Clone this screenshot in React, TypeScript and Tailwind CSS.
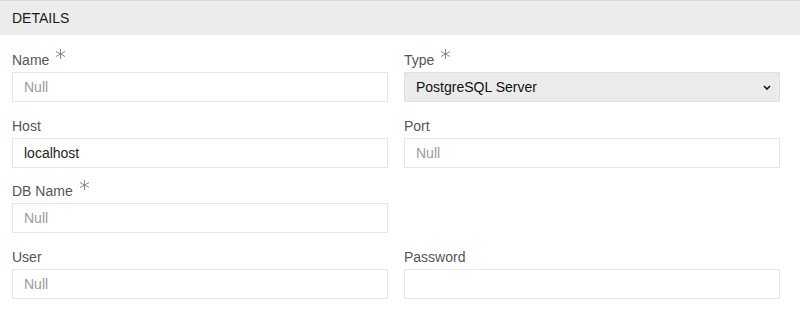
import React from "react";

const Req = () => (
  <svg
    width="11"
    height="10"
    viewBox="0 0 11 10"
    className="ml-[6px] -mt-px inline-block"
    stroke="#8a8a8a"
    strokeWidth="1"
    fill="none"
  >
    <line x1="5.5" y1="0" x2="5.5" y2="10" />
    <line x1="1" y1="2.5" x2="10" y2="7.5" />
    <line x1="1" y1="7.5" x2="10" y2="2.5" />
  </svg>
);

type FieldProps = {
  label: string;
  required?: boolean;
  value?: string;
  placeholder?: string;
};

const Field = ({ label, required, value, placeholder }: FieldProps) => (
  <div className="flex flex-col">
    <label className="h-5 leading-5 mb-[2px] text-[14px] text-[#555] flex items-start">
      <span>{label}</span>
      {required && <Req />}
    </label>
    <input
      type="text"
      defaultValue={value}
      placeholder={placeholder}
      className="h-[30px] border border-[#e6e6e6] bg-white px-[11px] text-[14px] text-[#222] placeholder:text-[#9a9a9a] outline-none"
    />
  </div>
);

export default function App() {
  return (
    <div
      className="w-[800px] h-[315px] bg-white"
      style={{ fontFamily: '"Liberation Sans", Arial, sans-serif' }}
    >
      <div className="h-[35px] border-t border-[#d9d9d9] bg-[#ececec] px-3 pt-px flex items-center text-[14px] text-[#1a1a1a]">
        DETAILS
      </div>
      <div className="grid grid-cols-2 gap-x-4 gap-y-[13.7px] pl-3 pr-5 pt-[15px]">
        <Field label="Name" required placeholder="Null" />
        <div className="flex flex-col">
          <label className="h-5 leading-5 mb-[2px] text-[14px] text-[#555] flex items-start">
            <span>Type</span>
            <Req />
          </label>
          <div className="relative h-[30px] border border-[#e0e0e0] bg-[#ebebeb] flex items-center px-[11px] text-[14px] text-[#111]">
            <span>PostgreSQL Server</span>
            <svg
              width="8"
              height="5"
              viewBox="0 0 8 5"
              className="absolute right-[8px] top-[12px]"
              fill="none"
              stroke="#111"
              strokeWidth="1.6"
            >
              <path d="M1 1l3 3 3-3" />
            </svg>
          </div>
        </div>
        <Field label="Host" value="localhost" />
        <Field label="Port" placeholder="Null" />
        <Field label="DB Name" required placeholder="Null" />
        <div />
        <Field label="User" placeholder="Null" />
        <Field label="Password" />
      </div>
    </div>
  );
}
